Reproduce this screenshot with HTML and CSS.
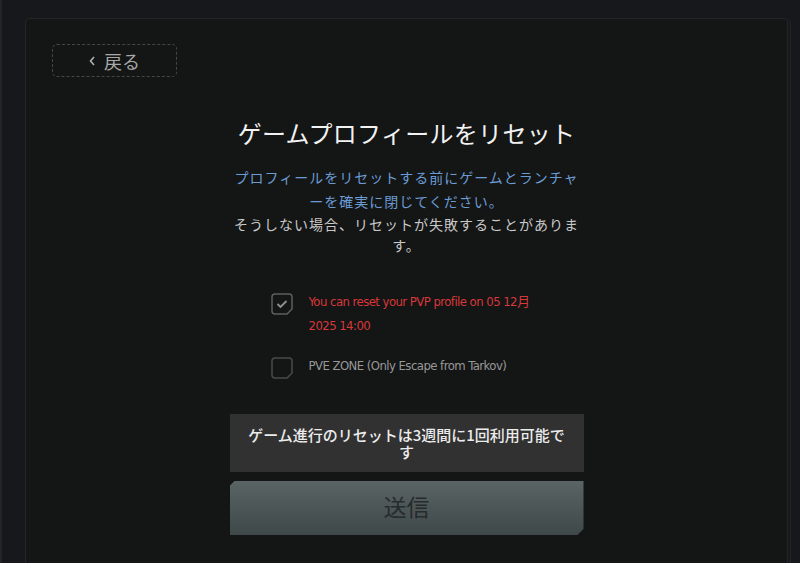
FILE: index.html
```html
<!DOCTYPE html>
<html lang="ja">
<head>
<meta charset="UTF-8">
<meta name="viewport" content="width=device-width, initial-scale=1.0">
<title>ゲームプロフィールをリセット</title>
<link rel="stylesheet" href="styles.css">
</head>
<body>
<div class="page">
  <div class="panel">
    <a href="#" class="back-link">
      <svg class="back-icon" width="6" height="10" viewBox="0 0 6 10"><path d="M5 1 L1.5 5 L5 9" fill="none" stroke="#b0b0b0" stroke-width="1.6"/></svg>
      <span>戻る</span>
    </a>

    <div class="content">
      <h1>ゲームプロフィールをリセット</h1>
      <p class="note-blue">プロフィールをリセットする前にゲームとランチャーを確実に閉じてください。</p>
      <p class="note-gray">そうしない場合、リセットが失敗することがあります。</p>

      <div class="options">
        <label class="option">
          <svg class="check" width="22" height="22" viewBox="0 0 22 22">
            <path d="M4 1 H18 Q21 1 21 4 V16 L16 21 H4 Q1 21 1 18 V4 Q1 1 4 1 Z" fill="none" stroke="#5e5e5e" stroke-width="1.5"/>
            <path d="M6.5 11 L9.5 14 L15.5 8" fill="none" stroke="#909090" stroke-width="1.8"/>
          </svg>
          <span class="option-text warn">You can reset your PVP profile on 05 12月 2025 14:00</span>
        </label>
        <label class="option">
          <svg class="check" width="22" height="22" viewBox="0 0 22 22">
            <path d="M4 1 H18 Q21 1 21 4 V16 L16 21 H4 Q1 21 1 18 V4 Q1 1 4 1 Z" fill="none" stroke="#4a4a4a" stroke-width="1.5"/>
          </svg>
          <span class="option-text">PVE ZONE (Only Escape from Tarkov)</span>
        </label>
      </div>

      <div class="limit-box">ゲーム進行のリセットは3週間に1回利用可能です</div>
      <button class="submit-btn" disabled>送信</button>
    </div>
  </div>
</div>
</body>
</html>
```

FILE: styles.css
```css
body {
  margin: 0;
  background-color: #17181b;
  font-family: "Noto Sans CJK JP", "Noto Sans", sans-serif;
  color: #e6e6e6;
  height: 563px;
  overflow: hidden;
  border-left: 2px solid #222427;
  box-sizing: border-box;
}
.page {
  padding: 18px 12px 0 23px;
}
.panel {
  height: 545px;
  box-sizing: border-box;
  overflow: hidden;
  background-color: #141515;
  border: 1px solid #252628;
  border-bottom: none;
  border-radius: 5px 5px 0 0;
  padding: 25px 26px 0;
  box-shadow: 3px 0 0 -1px #17181b, 4px 0 0 -1px #242528;
}
.back-link {
  display: flex;
  align-items: center;
  justify-content: center;
  gap: 9px;
  width: 125px;
  height: 33px;
  box-sizing: border-box;
  border: 1px dashed #454649;
  border-radius: 5px;
  color: #a8a8a8;
  font-size: 18px;
  text-decoration: none;
}
.content {
  width: 354px;
  margin: 0 auto;
  text-align: center;
}
h1 {
  margin: 40px 0 0;
  font-size: 24px;
  font-weight: 400;
  line-height: 32px;
  letter-spacing: 0.3px;
  color: #f2f2f2;
}
.note-blue {
  margin: 16px 0 0;
  padding: 0 2px;
  font-size: 14px;
  line-height: 24px;
  letter-spacing: 1px;
  color: #6b9bd3;
}
.note-gray {
  margin: 1px 0 0;
  padding: 0 2px;
  font-size: 14px;
  line-height: 21px;
  letter-spacing: 1px;
  color: #c9c9c9;
}
.options {
  margin-top: 34px;
  padding-left: 41px;
  display: flex;
  flex-direction: column;
  gap: 16px;
  text-align: left;
}
.option {
  display: flex;
  align-items: flex-start;
  gap: 16px;
  cursor: pointer;
}
.check {
  flex: none;
  margin-top: 3px;
}
.option-text {
  max-width: 226px;
  font-family: "DejaVu Sans Condensed", "Noto Sans CJK JP", sans-serif;
  font-size: 13px;
  letter-spacing: -0.55px;
  line-height: 24px;
  color: #989898;
}
.option-text.warn {
  color: #d8383a;
}
.limit-box {
  margin-top: 35px;
  padding: 12px 15px;
  background-color: #313131;
  font-size: 15px;
  font-weight: 500;
  line-height: 17px;
  color: #ececec;
}
.submit-btn {
  display: block;
  width: 100%;
  height: 54px;
  margin-top: 9px;
  padding: 0 0 5px;
  border: none;
  background: linear-gradient(to bottom, #5a6464, #3f4849);
  clip-path: polygon(5px 0, 100% 0, 100% calc(100% - 6px), calc(100% - 6px) 100%, 0 100%, 0 5px);
  font-family: inherit;
  font-size: 23px;
  color: #262b2c;
}
```
